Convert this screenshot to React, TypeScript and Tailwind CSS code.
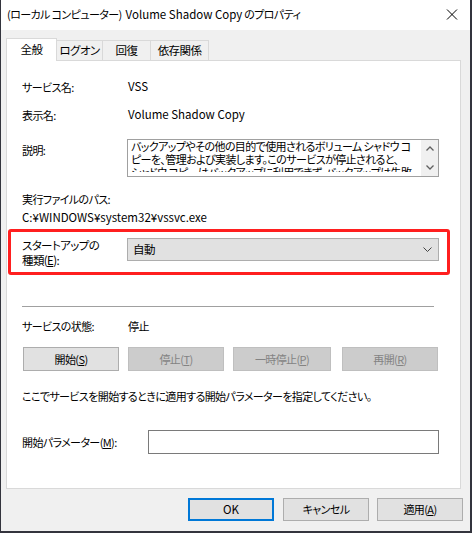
import React from 'react';

// Windows service properties dialog (Volume Shadow Copy)
const font = "font-['Noto_Sans_CJK_JP','Noto_Sans',sans-serif] [font-feature-settings:'palt'] tracking-[-0.6px]";

function Btn({ children, w, disabled, primary, className = '' }: { children: React.ReactNode; w: string; disabled?: boolean; primary?: boolean; className?: string }) {
  const base = 'h-full flex items-center justify-center text-[11px] box-border';
  const look = disabled
    ? 'bg-[#cccccc] border border-[#bfbfbf] text-[#838383]'
    : primary
    ? 'bg-[#e1e1e1] border-2 border-[#0078d7] text-black'
    : 'bg-[#e1e1e1] border border-[#adadad] text-black';
  return <div className={`${base} ${look} ${w} ${className}`}>{children}</div>;
}

export default function App() {
  const tabs = [
    { label: 'ログオン', w: 'w-[46px]' },
    { label: '回復', w: 'w-[48px]' },
    { label: '依存関係', w: 'w-[58px]' },
  ];

  return (
    <div className={`w-[472px] h-[533px] bg-[#33343d] overflow-hidden ${font}`}>
      <div className="ml-[1px] w-[469px] h-[531px] bg-[#f0f0f0] flex flex-col text-black">
        {/* タイトルバー */}
        <div className="h-[30px] bg-white flex items-center justify-between pl-[6px] pr-[4px] shrink-0">
          <span className="text-[11px]">
            (ローカル コンピューター)<span className="ml-[4px] tracking-normal text-[11.5px]">Volume Shadow Copy</span> のプロパティ
          </span>
          <svg width="30" height="30" viewBox="0 0 30 30" className="mr-[-1px]">
            <path d="M10 9.5 L20 19.5 M20 9.5 L10 19.5" stroke="#000" strokeWidth="1" fill="none" />
          </svg>
        </div>

        <div className="px-[5px] pt-[8px]">
          {/* タブ */}
          <div className="flex items-end h-[22px] relative z-10 text-[11.5px]">
            <div className="w-[51px] h-[23px] bg-white border border-[#d9d9d9] border-b-0 flex items-center justify-center mb-[-1px]">
              全般
            </div>
            {tabs.map((t) => (
              <div
                key={t.label}
                className={`${t.w} h-[20px] bg-[#f0f0f0] border border-[#d9d9d9] border-l-0 border-b-0 flex items-center justify-center`}
              >
                {t.label}
              </div>
            ))}
          </div>

          {/* タブパネル */}
          <div className="h-[429px] w-[455px] bg-white border border-[#d9d9d9] flex flex-col text-[11px]">
            <div className="mt-[17px] h-[18px] flex items-center pl-[15px]">
              <span className="w-[106px]">サービス名:</span>
              <span className="tracking-normal text-[11.5px]">VSS</span>
            </div>
            <div className="mt-[10px] h-[18px] flex items-center pl-[15px]">
              <span className="w-[106px]">表示名:</span>
              <span className="tracking-normal text-[11.5px]">Volume Shadow Copy</span>
            </div>
            <div className="mt-[15px] flex pl-[15px]">
              <span className="w-[105px] mt-[2px] h-[18px] flex items-center">説明:</span>
              <div className="w-[312px] h-[38px] border border-[#a0a0a0] flex overflow-hidden">
                <div className="flex-1 h-[32px] pl-[3px] leading-[13px] whitespace-nowrap overflow-hidden">
                  <div>バックアップやその他の目的で使用されるボリューム シャドウ コ</div>
                  <div>ピーを、管理および実装します。このサービスが停止されると、</div>
                  <div>シャドウ コピーはバックアップに利用できず、バックアップは失敗</div>
                </div>
                <div className="w-[17px] bg-[#f0f0f0] flex flex-col items-center justify-between py-[6px]">
                  <svg width="8" height="5" viewBox="0 0 8 5"><path d="M0.5 4.5 L4 1 L7.5 4.5" stroke="#606060" strokeWidth="1.3" fill="none" /></svg>
                  <svg width="8" height="5" viewBox="0 0 8 5"><path d="M0.5 0.5 L4 4 L7.5 0.5" stroke="#606060" strokeWidth="1.3" fill="none" /></svg>
                </div>
              </div>
            </div>
            <div className="mt-[13px] h-[18px] flex items-center pl-[15px]">実行ファイルのパス:</div>
            <div className="mt-[1px] h-[18px] flex items-center pl-[15px] tracking-normal text-[11.5px]">C:¥WINDOWS¥system32¥vssvc.exe</div>

            {/* スタートアップの種類 (赤枠) */}
            <div className="mt-[2px] ml-[1px] w-[442px] h-[46px] border-[3px] border-[#ff1f1f] rounded-[3px] flex items-start pl-[11px]">
              <div className="w-[105px] pt-[6px] leading-[15px] text-[11.5px]">
                <div>スタートアップの</div>
                <div>
                  種類(<u>E</u>):
                </div>
              </div>
              <div className="mt-[6px] w-[312px] h-[23px] bg-[#e1e1e1] border border-[#adadad] flex items-center justify-between pl-[5px] pr-[6px] text-[11.5px]">
                <span>自動</span>
                <svg width="9" height="5" viewBox="0 0 9 5"><path d="M0.5 0.5 L4.5 4.5 L8.5 0.5" stroke="#444" strokeWidth="1" fill="none" /></svg>
              </div>
            </div>

            <div className="mt-[31px] ml-[15px] w-[412px] h-[1px] bg-[#a0a0a0]" />

            <div className="mt-[10px] h-[18px] flex items-center pl-[15px]">
              <span className="w-[106px]">サービスの状態:</span>
              <span>停止</span>
            </div>

            <div className="mt-[12px] h-[24px] flex pl-[16px]">
              <Btn w="w-[96px]">
                開始(<u>S</u>)
              </Btn>
              <Btn w="w-[96px]" disabled className="ml-[9px]">
                停止(<u>T</u>)
              </Btn>
              <Btn w="w-[98px]" disabled className="ml-[9px]">
                一時停止(<u>P</u>)
              </Btn>
              <Btn w="w-[96px]" disabled className="ml-[11px]">
                再開(<u>R</u>)
              </Btn>
            </div>

            <div className="mt-[16px] h-[18px] flex items-center pl-[15px]">
              ここでサービスを開始するときに適用する開始パラメーターを指定してください。
            </div>

            <div className="mt-[25px] flex items-center pl-[15px]">
              <span className="w-[126px]">
                開始パラメーター(<u>M</u>):
              </span>
              <div className="w-[291px] h-[24px] border border-[#7a7a7a] bg-white" />
            </div>
          </div>

          {/* ダイアログボタン */}
          <div className="mt-[9px] h-[23px] flex justify-end pr-[2px]">
            <Btn w="w-[86px]" primary>
              <span className="tracking-normal text-[11.5px]">OK</span>
            </Btn>
            <Btn w="w-[86px]" className="ml-[9px]">キャンセル</Btn>
            <Btn w="w-[86px]" className="ml-[8px]">
              適用(<u>A</u>)
            </Btn>
          </div>
        </div>
      </div>
    </div>
  );
}
